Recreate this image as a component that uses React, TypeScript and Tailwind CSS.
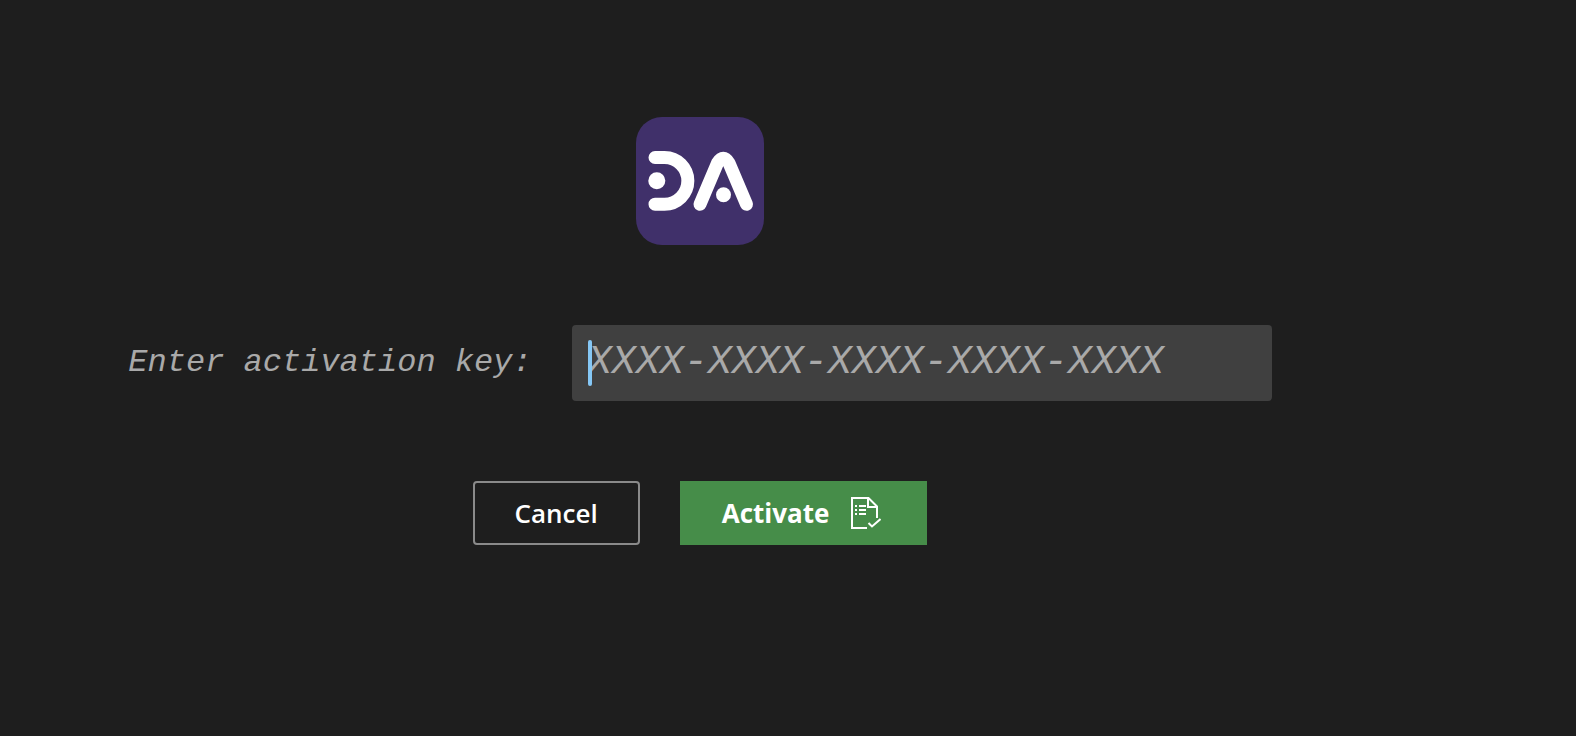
function Logo() {
  return (
    <svg width="128" height="128" viewBox="0 0 128 128" role="img" aria-label="DA">
      <rect width="128" height="128" rx="26" fill="#40306A" />
      <g fill="none" stroke="#FFFFFF" strokeWidth="13" strokeLinecap="round" strokeLinejoin="round">
        <path d="M19 40.5H28.5A23.3 23.3 0 0 1 28.5 87.2H19" />
        <path d="M64 87.2L81.5 46Q87.3 36.5 93 46L110.5 87.2" />
      </g>
      <circle cx="20.8" cy="63.8" r="8.5" fill="#FFFFFF" />
      <circle cx="87.5" cy="77.8" r="7.5" fill="#FFFFFF" />
    </svg>
  );
}

function TaskIcon() {
  return (
    <svg width="32" height="32" viewBox="0 0 32 32" fill="none" stroke="#FFFFFF" strokeWidth="2" aria-hidden="true">
      <path d="M18 31H3V1H19.5L28 9.5V21" />
      <path d="M19 1V10H28" />
      <path d="M6 9H8M10 9H17M6 13H8M10 13H17M6 17H8M10 17H17" />
      <path d="M19.5 26L23 29.5L31.5 22" />
    </svg>
  );
}

export default function App() {
  return (
    <main className="flex min-h-screen flex-col items-center gap-20 bg-[#1e1e1e] pt-[117px] pr-44 font-['Open_Sans','Noto_Sans',sans-serif]">
      <Logo />

      <form className="flex flex-col items-center gap-20" onSubmit={(e) => e.preventDefault()}>
        <div className="flex items-center gap-10 font-['Liberation_Mono',monospace] text-[#a9a9a9] italic">
          <label htmlFor="activation-key" className="text-[32px] leading-10 whitespace-nowrap">
            Enter activation key:
          </label>
          <div className="relative">
            <input
              id="activation-key"
              type="text"
              placeholder="XXXX-XXXX-XXXX-XXXX-XXXX"
              className="h-[76px] w-[700px] rounded-sm bg-[#404040] px-4 pb-0.5 text-[40px] outline-none placeholder:text-[#a9a9a9]"
            />
            <span className="absolute top-[15px] left-4 h-[46px] w-1 rounded-xs bg-[#85c7f5]" />
          </div>
        </div>

        <div className="flex gap-10">
          <button
            type="button"
            className="h-16 rounded-sm border-2 border-[#8a8a8a] px-10 text-[26px] leading-8 font-semibold text-white"
          >
            Cancel
          </button>
          <button
            type="submit"
            className="flex h-16 items-center gap-5 border-2 border-[#468d49] bg-[#468d49] pr-11 pl-10 text-[26px] leading-8 font-bold text-white"
          >
            Activate
            <TaskIcon />
          </button>
        </div>
      </form>
    </main>
  );
}
